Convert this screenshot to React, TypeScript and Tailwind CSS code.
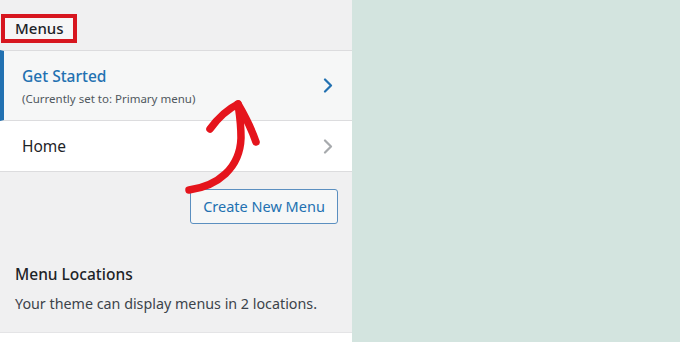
export default function App() {
  return (
    <div
      className="relative flex h-[342px] w-[680px] overflow-hidden"
      style={{ fontFamily: '"Noto Sans", "Open Sans", Arial, sans-serif' }}
    >
      <aside className="flex w-[352px] flex-col bg-[#f0f0f1]">
        <div className="h-[50px] pl-px pt-[14px]">
          <h3 className="inline-flex h-[29px] w-[76px] items-center border-4 border-[#d7161f] bg-[#f6f6f6] pl-[10px] text-[15px] font-medium leading-none text-[#1d2327]">
            Menus
          </h3>
        </div>

        <button className="flex h-[71px] items-center justify-between border-y border-l-4 border-y-[#dcdcde] border-l-[#2271b1] bg-[#f6f7f7] pl-[18px] pr-[19px] text-left">
          <div className="flex flex-col">
            <span className="text-[15.5px] font-medium leading-[20px] text-[#2271b1]">
              Get Started
            </span>
            <span className="mt-[5px] text-[11.5px] leading-[15px] text-[#50575e]">
              (Currently set to: Primary menu)
            </span>
          </div>
          <Chevron className="text-[#2271b1]" />
        </button>

        <button className="flex h-[51px] items-center justify-between border-b border-[#dcdcde] bg-white pl-[22px] pr-[19px] text-left">
          <span className="text-[15.5px] leading-[20px] text-[#1d2327]">Home</span>
          <Chevron className="text-[#a7aaad]" />
        </button>

        <div className="flex justify-end pr-[14px] pt-[17px]">
          <button className="h-[35px] w-[148px] rounded-[3px] border border-[#5b8fc0] bg-[#f6f7f7] text-[14.5px] text-[#2271b1]">
            Create New Menu
          </button>
        </div>

        <div className="flex flex-1 flex-col px-[15px] pt-[40px]">
          <h4 className="text-[15.5px] font-medium leading-[20px] text-[#1d2327]">
            Menu Locations
          </h4>
          <p className="mt-[10px] text-[14.3px] leading-[20px] text-[#3c434a]">
            Your theme can display menus in 2 locations.
          </p>
        </div>

        <div className="h-[10px] border-t border-[#e4e4e6] bg-white" />
      </aside>

      <main className="flex-1 bg-[#d3e4df]" />

      <svg
        className="pointer-events-none absolute left-[170px] top-[90px]"
        width="100"
        height="110"
        viewBox="0 0 100 110"
        fill="none"
        stroke="#e5141c"
        strokeWidth="7.5"
        strokeLinecap="round"
        strokeLinejoin="round"
      >
        <path d="M19 100 C 48 96, 70 78, 71 48 C 71 32, 69 21, 68 14" />
        <path d="M40 39 C 48 28, 58 19, 68 14 C 75 26, 82 40, 86 52" />
      </svg>
    </div>
  )
}

function Chevron({ className }: { className: string }) {
  return (
    <svg
      className={className}
      width="10"
      height="15"
      viewBox="0 0 10 15"
      fill="none"
      stroke="currentColor"
      strokeWidth="2.2"
      strokeLinecap="round"
      strokeLinejoin="round"
    >
      <path d="M2 1.5 L8 7.5 L2 13.5" />
    </svg>
  )
}
